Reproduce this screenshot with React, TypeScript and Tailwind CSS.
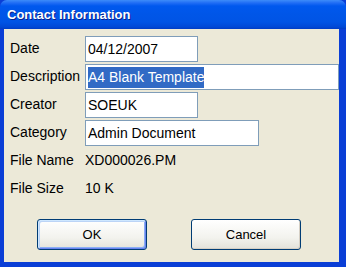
import React from "react";

const font = { fontFamily: '"Liberation Sans", Arial, sans-serif' };

function Field({ w, children }: { w: string; children: React.ReactNode }) {
  return (
    <div
      className={`h-[26px] ${w} border border-[#7f9db9] bg-white flex items-center pl-[2px] text-[14px] text-black whitespace-nowrap overflow-hidden`}
    >
      {children}
    </div>
  );
}

function Row({ label, children }: { label: string; children: React.ReactNode }) {
  return (
    <div className="flex items-center h-[26px]">
      <div className="w-[81px] pl-[6px] pb-[2px] text-[14px] text-black">{label}</div>
      {children}
    </div>
  );
}

export default function App() {
  return (
    <div className="w-[346px] h-[267px] flex flex-col bg-[#0a3ed6]" style={font}>
      <div className="h-[29px] shrink-0 rounded-t-[7px] flex items-center pl-[7px] pt-[1px] bg-[linear-gradient(to_bottom,#3d8cf9_0px,#1f6cf5_3px,#0058ee_6px,#0056e8_14px,#0054e5_22px,#0048d6_27px,#003cc4_29px)]">
        <span className="text-white font-bold text-[13px] [text-shadow:1px_1px_0_#0c1f8a]">
          Contact Information
        </span>
      </div>
      <div className="flex-1 flex ml-[4px] mr-[7px] mb-[5px] bg-[#ece9d8]">
        <div className="flex-1 flex flex-col pt-[7px]">
          <div className="flex flex-col gap-[2px]">
            <Row label="Date">
              <Field w="w-[113px]">04/12/2007</Field>
            </Row>
            <Row label="Description">
              <Field w="w-[254px]">
                <span className="bg-[#316ac5] text-white">A4 Blank Template</span>
              </Field>
            </Row>
            <Row label="Creator">
              <Field w="w-[113px]">SOEUK</Field>
            </Row>
            <Row label="Category">
              <Field w="w-[174px]">Admin Document</Field>
            </Row>
            <Row label="File Name">
              <div className="text-[14px] text-black pb-[2px]">XD000026.PM</div>
            </Row>
            <Row label="File Size">
              <div className="text-[14px] text-black pb-[2px]">10 K</div>
            </Row>
          </div>
          <div className="flex mt-[17px] pl-[33px] gap-[44px]">
            <button className="w-[110px] h-[31px] rounded-[3px] border border-[#003c74] bg-[linear-gradient(to_bottom,#ffffff,#f3f3ee_60%,#e3e2da)] shadow-[inset_1px_1px_0_#cee7ff,inset_-1px_-1px_0_#6982ee,inset_2px_2px_0_#bcd4f6,inset_-2px_-2px_0_#89adf4] text-[13px] text-black">
              OK
            </button>
            <button className="w-[110px] h-[31px] rounded-[3px] border border-[#003c74] bg-[linear-gradient(to_bottom,#ffffff,#f3f3ee_60%,#e3e2da)] shadow-[inset_-1px_-1px_0_#d6d0c5] text-[13px] text-black">
              Cancel
            </button>
          </div>
        </div>
      </div>
    </div>
  );
}
